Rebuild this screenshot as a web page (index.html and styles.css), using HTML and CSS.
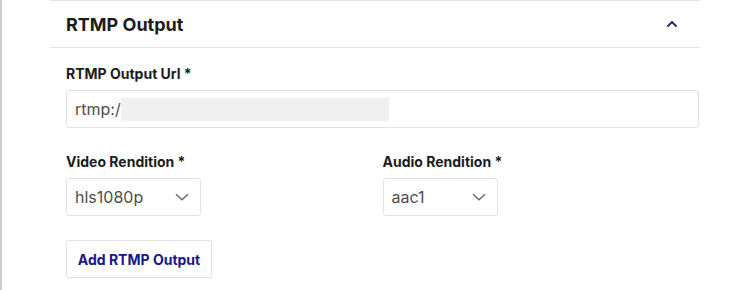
FILE: index.html
```html
<!DOCTYPE html>
<html>
<head>
<meta charset="utf-8">
<link rel="stylesheet" href="styles.css">
</head>
<body>
<div class="page">
  <section class="panel">
    <header class="panel-head">
      <h2 class="panel-title">RTMP Output</h2>
      <svg class="chev-up" width="12" height="8" viewBox="0 0 12 8"><path d="M1.5 6.5 L6 2 L10.5 6.5" fill="none" stroke="#1b1b7e" stroke-width="1.8"/></svg>
    </header>
    <div class="panel-body">
      <div class="field">
        <label class="label">RTMP Output Url *</label>
        <div class="input"><span class="val">rtmp:/</span><span class="redact"></span></div>
      </div>
      <div class="row">
        <div class="field">
          <label class="label">Video Rendition *</label>
          <div class="select select-video"><span class="val">hls1080p</span><svg class="chev-down" width="14" height="8" viewBox="0 0 14 8"><path d="M1 1.2 L7 6.8 L13 1.2" fill="none" stroke="#6b6b6b" stroke-width="1.5"/></svg></div>
        </div>
        <div class="field">
          <label class="label">Audio Rendition *</label>
          <div class="select select-audio"><span class="val">aac1</span><svg class="chev-down" width="14" height="8" viewBox="0 0 14 8"><path d="M1 1.2 L7 6.8 L13 1.2" fill="none" stroke="#6b6b6b" stroke-width="1.5"/></svg></div>
        </div>
      </div>
      <button class="btn">Add RTMP Output</button>
    </div>
  </section>
</div>
</body>
</html>
```
FILE: styles.css
```css
html, body {
  margin: 0;
  padding: 0;
  background: #ffffff;
}
body {
  font-family: Inter, "Liberation Sans", sans-serif;
  color: #1c1c1c;
}
.page {
  height: 290px;
  border-left: 2px solid #cdcdd2;
  box-sizing: border-box;
  padding-left: 48px;
}
.panel {
  width: 650px;
  border-top: 1px solid #e3e3e3;
}
.panel-head {
  height: 46px;
  border-bottom: 1px solid #e3e3e3;
  display: flex;
  align-items: center;
  justify-content: space-between;
  padding: 0 22px 0 16px;
}
.panel-title {
  margin: 0;
  font-size: 18px;
  font-weight: 700;
  line-height: 20px;
  position: relative;
  top: 1px;
}
.chev-up {
  display: block;
}
.panel-body {
  padding: 16px 1px 0 16px;
}
.field {
  display: flex;
  flex-direction: column;
}
.label {
  font-size: 14px;
  font-weight: 700;
  line-height: 20px;
  margin-bottom: 6px;
}
.input, .select {
  height: 38px;
  box-sizing: border-box;
  border: 1px solid #e2e2e2;
  border-radius: 3px;
  display: flex;
  align-items: center;
  padding: 0 8px;
  font-size: 16px;
  color: #4d4d4d;
}
.redact {
  display: inline-block;
  width: 268px;
  height: 23px;
  background: #f0f0f0;
  margin-left: 0;
}
.row {
  display: grid;
  grid-template-columns: 1fr 1fr;
  margin-top: 24px;
}
.select {
  justify-content: space-between;
  padding-right: 11px;
}
.select-video { width: 135px; }
.select-audio { width: 115px; }
.btn {
  margin-top: 24px;
  width: 146px;
  height: 38px;
  background: #fff;
  border: 1px solid #e2e2e2;
  border-radius: 2px;
  font-family: Inter, "Liberation Sans", sans-serif;
  font-weight: 700;
  font-size: 14px;
  color: #17178a;
  padding: 0;
}
```
